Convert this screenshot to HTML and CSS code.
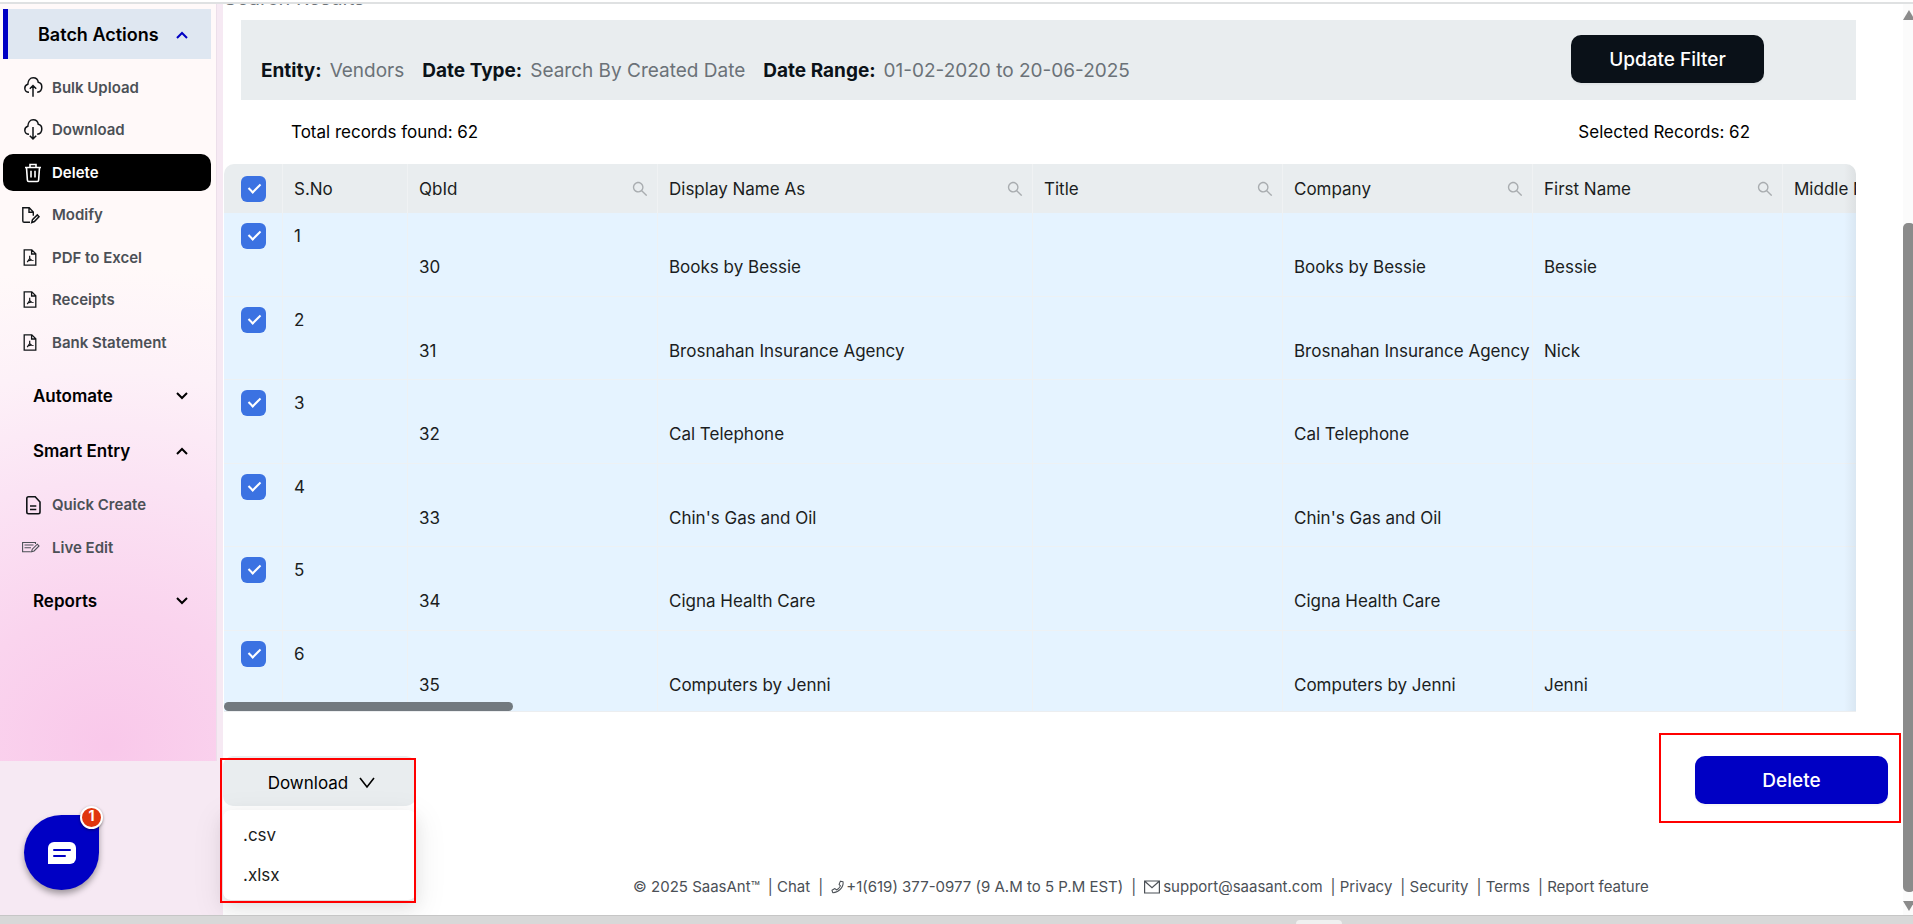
FILE: index.html
```html
<!DOCTYPE html>
<html lang="en">
<head>
  <meta charset="UTF-8" />
  <meta name="viewport" content="width=device-width,initial-scale=1" />
  <title>SaasAnt - Batch Delete</title>
  <link rel="stylesheet" href="styles.css">
</head>

<body>
  <!-- icon set -->
  <svg class="sprite" aria-hidden="true">
    <symbol id="i-search" viewBox="64 64 896 896">
      <path fill="currentColor" d="M909.6 854.5L649.9 594.8C690.2 542.7 712 479 712 412c0-80.2-31.3-155.4-87.9-212.1-56.6-56.7-132-87.9-212.1-87.9s-155.5 31.3-212.1 87.9C143.2 256.5 112 331.8 112 412c0 80.1 31.3 155.5 87.9 212.1C256.5 680.8 331.8 712 412 712c67 0 130.6-21.8 182.7-62l259.7 259.6a8.2 8.2 0 0011.6 0l43.6-43.5a8.2 8.2 0 000-11.6zM570.4 570.4C528 612.7 471.8 636 412 636s-116-23.3-158.4-65.6C211.3 528 188 471.8 188 412s23.3-116.1 65.6-158.4C296 211.3 352.2 188 412 188s116.1 23.2 158.4 65.6S636 352.2 636 412s-23.3 116.1-65.6 158.4z"/>
    </symbol>
    <symbol id="i-up" viewBox="0 0 12 8"><path d="M1 7l5-5 5 5" fill="none" stroke="currentColor" stroke-width="2"/></symbol>
    <symbol id="i-down" viewBox="0 0 12 8"><path d="M1 1l5 5 5-5" fill="none" stroke="currentColor" stroke-width="2"/></symbol>
    <symbol id="i-cloud-up" viewBox="0 0 24 24">
      <path d="M8 16.300c-2.500 0-4.200-1.800-4.200-4 0-2 1.200-3.500 3-4C7 4.800 9 1.800 12.200 1.800c2.800 0 4.700 1.900 5.100 4.500 2.100.4 3.500 2.200 3.500 4.700 0 2.900-1.900 5-4.600 5.300M12 20.800V10M8.800 12.800L12 9.500l3.200 3.300" fill="none" stroke="currentColor" stroke-width="1.500"/>
    </symbol>
    <symbol id="i-cloud-down" viewBox="0 0 24 24">
      <path d="M8 16.300c-2.500 0-4.200-1.800-4.200-4 0-2 1.200-3.500 3-4C7 4.800 9 1.800 12.200 1.800c2.800 0 4.700 1.900 5.100 4.500 2.100.4 3.500 2.200 3.500 4.700 0 2.900-1.900 5-4.600 5.300M12 9v11.500M8.800 17.700l3.200 3.200 3.200-3.200" fill="none" stroke="currentColor" stroke-width="1.500"/>
    </symbol>
    <symbol id="i-trash" viewBox="0 0 24 24">
      <path d="M4 6.500h16M9 6.300V3.500h6v2.800M5.500 6.800l.9 12.500q.1 1.200 1.300 1.200h8.600q1.200 0 1.300-1.200l.9-12.500M10 9.800v6.800M14 9.800v6.800" fill="none" stroke="currentColor" stroke-width="1.600"/>
    </symbol>
    <symbol id="i-modify" viewBox="0 0 24 24">
      <path d="M9 19.300H3.200q-1.400 0-1.400-1.400V4.800h6.400L12.300 9v3.800M8 5v4.300h4.200" fill="none" stroke="currentColor" stroke-width="1.400"/>
      <path d="M10.800 19.500l.7-2.900 4.800-4.700 1.700 1.800-4.600 4.800z" fill="none" stroke="currentColor" stroke-width="1.500"/>
    </symbol>
    <symbol id="i-pdf" viewBox="0 0 24 24">
      <path d="M3.200 3.800h7.600l4 4v11.400H3.200zM10.600 4v4h4" fill="none" stroke="currentColor" stroke-width="1.300"/>
      <path d="M8.700 9.800v2.700L6.200 16.200M8.700 12.600q1.200 1.800 3.800 1.900M6.800 14.900l4-1" fill="none" stroke="currentColor" stroke-width="1.200"/>
    </symbol>
    <symbol id="i-file" viewBox="0 0 24 24">
      <path d="M7.500 3.800h6.700L19 9v10q0 1.700-1.700 1.700H7.500q-1.700 0-1.700-1.700V5.500q0-1.700 1.700-1.700zM9 13h6.300M9 16.500h6.300" fill="none" stroke="currentColor" stroke-width="1.600"/>
    </symbol>
    <symbol id="i-live" viewBox="0 0 24 24">
      <path d="M14.500 8V6.500H1.600v9.200h8.200M3.500 9h9M3.500 11.700h6.500M10.600 15.700l.7-2.500 5-5 1.700 1.800-4.900 4.900z" fill="none" stroke="currentColor" stroke-width="1.100"/>
    </symbol>
    <symbol id="i-phone" viewBox="0 0 16 16">
      <path d="M10.800 1.300l3 .7c.8 6.500-5.500 12.700-11.800 12.500l-.9-2.800 3.400-1.900 1.700 1.600c2-1 3.700-2.700 4.600-4.700L9.200 5z" fill="none" stroke="currentColor" stroke-width="1.200" stroke-linejoin="round"/>
    </symbol>
    <symbol id="i-mail" viewBox="0 0 16 14">
      <path d="M.6 1h14.800v12H.6zM.8 1.200L8 7.800l7.200-6.600" fill="none" stroke="currentColor" stroke-width="1.200"/>
    </symbol>
  </svg>

  <div class="app">
    <aside class="sidebar">
      <nav class="menu" aria-label="Main menu">
        <button class="group active">Batch Actions <svg class="chevron"><use href="#i-up"/></svg></button>
        <ul class="links batch">
          <li><a href="#"><svg class="icon"><use href="#i-cloud-up"/></svg>Bulk Upload</a></li>
          <li><a href="#"><svg class="icon"><use href="#i-cloud-down"/></svg>Download</a></li>
          <li><a href="#" class="current"><svg class="icon"><use href="#i-trash"/></svg>Delete</a></li>
          <li><a href="#"><svg class="icon"><use href="#i-modify"/></svg>Modify</a></li>
          <li><a href="#"><svg class="icon"><use href="#i-pdf"/></svg>PDF to Excel</a></li>
          <li><a href="#"><svg class="icon"><use href="#i-pdf"/></svg>Receipts</a></li>
          <li><a href="#"><svg class="icon"><use href="#i-pdf"/></svg>Bank Statement</a></li>
        </ul>
        <button class="group">Automate <svg class="chevron"><use href="#i-down"/></svg></button>
        <button class="group">Smart Entry <svg class="chevron"><use href="#i-up"/></svg></button>
        <ul class="links">
          <li><a href="#"><svg class="icon"><use href="#i-file"/></svg>Quick Create</a></li>
          <li><a href="#"><svg class="icon icon-thin"><use href="#i-live"/></svg>Live Edit</a></li>
        </ul>
        <button class="group">Reports <svg class="chevron"><use href="#i-down"/></svg></button>
      </nav>

      <button class="chat" aria-label="Open chat, 1 unread message">
        <svg viewBox="0 0 28 22" width="28" height="22">
          <path fill="#fff" d="M6 0h16a6 6 0 016 6v10a6 6 0 01-6 6H0V6a6 6 0 016-6z"/>
          <path d="M6 8h16M6 14h11" stroke="#0000c4" stroke-width="2" stroke-linecap="round"/>
        </svg>
        <span class="badge">1</span>
      </button>
    </aside>

    <main class="content">
      <h2 class="title">Search Results</h2>

      <section class="filter-bar">
        <dl class="filters">
          <div><dt>Entity:</dt><dd>Vendors</dd></div>
          <div><dt>Date Type:</dt><dd>Search By Created Date</dd></div>
          <div><dt>Date Range:</dt><dd>01-02-2020 to 20-06-2025</dd></div>
        </dl>
        <button class="btn btn-dark">Update Filter</button>
      </section>

      <div class="counts">
        <span>Total records found: 62</span>
        <span>Selected Records: 62</span>
      </div>

      <div class="table-wrap">
        <table class="records">
          <colgroup>
            <col class="c-check"><col class="c-no"><col class="c-std"><col class="c-name">
            <col class="c-std"><col class="c-std"><col class="c-std"><col class="c-std">
          </colgroup>
          <thead>
            <tr>
              <th><input type="checkbox" aria-label="Select all" checked></th>
              <th>S.No</th>
              <th><div class="th">QbId <svg class="search"><use href="#i-search"/></svg></div></th>
              <th><div class="th">Display Name As <svg class="search"><use href="#i-search"/></svg></div></th>
              <th><div class="th">Title <svg class="search"><use href="#i-search"/></svg></div></th>
              <th><div class="th">Company <svg class="search"><use href="#i-search"/></svg></div></th>
              <th><div class="th">First Name <svg class="search"><use href="#i-search"/></svg></div></th>
              <th><div class="th">Middle Name</div></th>
            </tr>
          </thead>
          <tbody>
            <tr>
              <td><input type="checkbox" aria-label="Select row 1" checked></td>
              <td>1</td><td>30</td><td>Books by Bessie</td><td></td><td>Books by Bessie</td><td>Bessie</td><td></td>
            </tr>
            <tr>
              <td><input type="checkbox" aria-label="Select row 2" checked></td>
              <td>2</td><td>31</td><td>Brosnahan Insurance Agency</td><td></td><td>Brosnahan Insurance Agency</td><td>Nick</td><td></td>
            </tr>
            <tr>
              <td><input type="checkbox" aria-label="Select row 3" checked></td>
              <td>3</td><td>32</td><td>Cal Telephone</td><td></td><td>Cal Telephone</td><td></td><td></td>
            </tr>
            <tr>
              <td><input type="checkbox" aria-label="Select row 4" checked></td>
              <td>4</td><td>33</td><td>Chin's Gas and Oil</td><td></td><td>Chin's Gas and Oil</td><td></td><td></td>
            </tr>
            <tr>
              <td><input type="checkbox" aria-label="Select row 5" checked></td>
              <td>5</td><td>34</td><td>Cigna Health Care</td><td></td><td>Cigna Health Care</td><td></td><td></td>
            </tr>
            <tr>
              <td><input type="checkbox" aria-label="Select row 6" checked></td>
              <td>6</td><td>35</td><td>Computers by Jenni</td><td></td><td>Computers by Jenni</td><td>Jenni</td><td></td>
            </tr>
          </tbody>
        </table>
        <div class="table-scroll"></div>
      </div>

      <div class="actions">
        <div class="download">
          <button class="btn-download">Download <svg viewBox="0 0 16 12" width="16" height="12"><path d="M1 1l7 9 7-9" fill="none" stroke="currentColor" stroke-width="1.600"/></svg></button>
          <div class="dropdown">
            <a href="#">.csv</a>
            <a href="#">.xlsx</a>
          </div>
          <div class="outline outline-download"></div>
        </div>
        <div class="delete">
          <button class="btn btn-blue">Delete</button>
          <div class="outline outline-delete"></div>
        </div>
      </div>

      <footer class="footer">
        <span>© 2025 SaasAnt™</span>
        <span>| <a href="#">Chat</a></span>
        <span>|</span>
        <a href="#" class="contact"><svg width="14" height="14"><use href="#i-phone"/></svg>+1(619) 377-0977 (9 A.M to 5 P.M EST)</a>
        <span>|</span>
        <a href="#" class="contact mail"><svg width="16" height="14"><use href="#i-mail"/></svg>support@saasant.com</a>
        <span>| <a href="#">Privacy</a></span>
        <span>| <a href="#">Security</a></span>
        <span>| <a href="#">Terms</a></span>
        <span>| <a href="#">Report feature</a></span>
      </footer>
    </main>

    <div class="page-scroll">
      <svg viewBox="0 0 12 10" width="12" height="10"><path d="M0 10L6 0l6 10z" fill="#8b8b8b"/></svg>
      <div class="thumb"></div>
      <svg viewBox="0 0 12 10" width="12" height="10"><path d="M0 0l6 10 6-10z" fill="#8b8b8b"/></svg>
    </div>
  </div>
  <div class="taskbar"><div class="tab"></div></div>
</body>
</html>
```
FILE: styles.css
```css
:root {
  --blue: #0000c4;
  --grey-bg: #e9edef;
  --row: #e5f3ff;
  --check: #3b72e2;
  --text: #1b1d21;
  --muted: #6b7278;
  --pink-bg: #f6e9f3;
  --radius: 10px;
}

*, *::before, *::after {
  box-sizing: border-box;
}
body {
  margin: 0;
  height: 100vh;
  display: flex;
  flex-direction: column;
  overflow: hidden;
  border-top: 2px solid #fff;
  font-family: Inter, "Liberation Sans", sans-serif;
  font-size: 17px;
  line-height: 24px;
  color: var(--text);
  background: #fff;
}
button {
  font: inherit;
  border: none;
  cursor: pointer;
}
a {
  color: inherit;
  text-decoration: none;
}
.sprite {
  display: none;
}

.app {
  flex: 1;
  min-height: 0;
  display: flex;
  overflow: hidden;
  position: relative;
  border-top: 2px solid #dfe1e2;
  background: var(--pink-bg);
}

/* sidebar */
.sidebar {
  width: 223px;
  flex: none;
  padding-right: 6px;
  display: flex;
  flex-direction: column;
}
.menu {
  height: 757px;
  flex: none;
  padding: 5px 5px 0 3px;
  border-right: 1px solid #ecdfea;
  background: radial-gradient(ellipse 560px 480px at 50% 98%, #f9c8ea 0%, #fad4ee 28%, #fbe3f4 55%, #fdf1f8 78%, #fff9f9 100%);
}
.group {
  display: flex;
  align-items: center;
  justify-content: space-between;
  width: 100%;
  height: 50px;
  margin-top: 10px;
  padding: 0 23px 0 30px;
  background: none;
  color: #000;
  font-size: 17px;
  font-weight: 600;
}
.group + .group {
  margin-top: 5px;
}
.group.active {
  margin-top: 0;
  padding-top: 2px;
  border-left: 5px solid var(--blue);
  background: #dfe7f1;
  font-size: 18px;
}
.group.active .chevron {
  color: var(--blue);
}
.chevron {
  width: 12px;
  height: 8px;
}
.links {
  list-style: none;
  margin: 10px 0 0;
  padding: 0;
  display: flex;
  flex-direction: column;
  gap: 6px;
}
.links.batch {
  height: 292px;
  justify-content: space-between;
  gap: 0;
}
.links a {
  display: flex;
  align-items: center;
  gap: 7px;
  height: 37px;
  padding-left: 18px;
  border-radius: var(--radius);
  color: #4b5056;
  font-size: 15px;
  font-weight: 600;
}
.links a.current {
  background: #000;
  color: #fff;
}
.icon {
  width: 24px;
  height: 24px;
  color: #111417;
}
.icon-thin {
  color: #4b5056;
}
.current .icon {
  color: #fff;
}

.chat {
  position: relative;
  display: flex;
  align-items: center;
  justify-content: center;
  width: 75px;
  height: 75px;
  margin: 54px 0 0 24px;
  padding: 0;
  border-radius: 50% 4px 50% 50%;
  background: var(--blue);
  box-shadow: 0 4px 6px rgba(0,0,0,0.35);
}
.badge {
  position: absolute;
  top: -9px;
  right: -4px;
  width: 23px;
  height: 23px;
  border: 2px solid #fff;
  border-radius: 50%;
  background: #e0360e;
  color: #fff;
  font-size: 14px;
  font-weight: 700;
  line-height: 16px;
  box-shadow: 0 1px 3px rgba(0,0,0,0.4);
}

/* main column */
.content {
  flex: 1;
  min-width: 0;
  background: #fff;
}
.title {
  margin: -16px 0 0 1px;
  height: 32px;
  font-size: 20px;
  font-weight: 400;
  line-height: 20px;
  color: var(--muted);
}
.filter-bar {
  display: flex;
  justify-content: space-between;
  height: 80px;
  margin: 0 57px 0 18px;
  padding: 15px 92px 0 20px;
  background: var(--grey-bg);
}
.filters {
  display: flex;
  gap: 18px;
  margin: 24px 0 0;
  font-size: 19px;
}
.filters div {
  display: flex;
  gap: 8px;
}
.filters dt {
  font-weight: 700;
  color: #0b1218;
}
.filters dd {
  margin: 0;
  color: var(--muted);
}
.btn {
  width: 193px;
  height: 48px;
  padding: 2px 0 0;
  border-radius: var(--radius);
  color: #fff;
  font-size: 19px;
  font-weight: 500;
  box-shadow: 0 2px 2px rgba(0,0,0,0.04);
}
.btn-dark {
  background: #0a1118;
}
.btn-blue {
  background: var(--blue);
}
.counts {
  display: flex;
  justify-content: space-between;
  margin: 20px 163px 20px 68px;
  color: #000;
}

.table-wrap {
  position: relative;
  height: 548px;
  margin: 0 57px 0 1px;
  overflow: hidden;
  border-radius: var(--radius) var(--radius) 0 0;
  border-bottom: 1px solid #eceef0;
}
.table-wrap::after {
  content: "";
  position: absolute;
  inset: 0 0 0 auto;
  width: 12px;
  background: linear-gradient(to right, rgba(5,5,5,0), rgba(5,5,5,0.05));
}
.records {
  width: 1809px;
  table-layout: fixed;
  border-collapse: separate;
  border-spacing: 0;
}
.c-check { width: 59px; }
.c-no { width: 125px; }
.c-std { width: 250px; }
.c-name { width: 375px; }
.records th {
  height: 49px;
  padding: 0 9px 0 11px;
  border-right: 1px solid #f0f2f3;
  background: var(--grey-bg);
  font-weight: 400;
  text-align: left;
}
.records td {
  height: 83px;
  padding: 42px 0 0 11px;
  border-right: 1px solid #edf1f4;
  border-bottom: 1px solid #edf1f4;
  background: var(--row);
  vertical-align: top;
  white-space: nowrap;
}
.records tr:nth-child(odd) td {
  height: 84px;
}
.records td:nth-child(2) {
  padding-top: 11px;
}
.records td:first-child {
  padding-top: 10px;
}
.records th:first-child,
.records td:first-child {
  padding-left: 17px;
}
.th {
  display: flex;
  align-items: center;
  justify-content: space-between;
}
.search {
  width: 16px;
  height: 16px;
  color: #a9adb0;
}
.records input {
  appearance: none;
  display: grid;
  place-items: center;
  width: 25px;
  height: 26px;
  margin: 0;
  border-radius: 6px;
  background: var(--check);
}
.records input::after {
  content: "";
  width: 7px;
  height: 12px;
  margin: -4px 0 0 2px;
  border: solid #fff;
  border-width: 0 2px 2px 0;
  transform: rotate(45deg);
}
.table-scroll {
  position: absolute;
  left: 0;
  bottom: 0;
  width: 289px;
  height: 9px;
  border-radius: 5px;
  background: #72797f;
}

/* download / delete row */
.actions {
  display: flex;
  justify-content: space-between;
  margin: 44px 25px 0 0;
}
.download,
.delete {
  position: relative;
}
.btn-download {
  display: flex;
  align-items: center;
  justify-content: center;
  gap: 11px;
  width: 193px;
  height: 50px;
  padding: 4px 0 0 4px;
  border-radius: var(--radius);
  background: var(--grey-bg);
  color: #000;
}
.dropdown {
  position: absolute;
  top: 54px;
  left: 0;
  width: 193px;
  padding: 5px 0;
  border-radius: 8px;
  background: #fff;
  box-shadow: 0 6px 16px rgba(0,0,0,0.08), 0 3px 6px -4px rgba(0,0,0,0.12), 0 9px 28px 8px rgba(0,0,0,0.05);
}
.dropdown a {
  display: block;
  padding: 8px 20px;
}
.outline {
  position: absolute;
  border: 2px solid #f00;
  pointer-events: none;
}
.outline-download {
  top: 2px;
  left: -3px;
  width: 196px;
  height: 145px;
}
.outline-delete {
  top: -23px;
  right: -13px;
  width: 242px;
  height: 90px;
}

.footer {
  display: flex;
  justify-content: center;
  gap: 8px;
  margin-top: 69px;
  padding-left: 146px;
  font-size: 15px;
  color: #4b5056;
  white-space: nowrap;
}
.contact {
  display: flex;
  align-items: center;
  gap: 1px;
}
.mail {
  gap: 3px;
}

/* window scrollbar */
.page-scroll {
  position: absolute;
  top: 0;
  right: -2px;
  bottom: 0;
  width: 12px;
  padding: 6px 0 4px;
  display: flex;
  flex-direction: column;
  justify-content: space-between;
  background: #fbfbfb;
}
.thumb {
  height: 669px;
  margin: 194px 0 0;
  border-radius: 5px;
  background: #8b8b8b;
}

.taskbar {
  flex: none;
  height: 9px;
  border-top: 1px solid #c6c6c6;
  background: #d8d8d8;
}
.tab {
  width: 46px;
  height: 4px;
  margin: 4px 0 0 1296px;
  border-radius: 4px 4px 0 0;
  background: #f0f0f0;
}
```
